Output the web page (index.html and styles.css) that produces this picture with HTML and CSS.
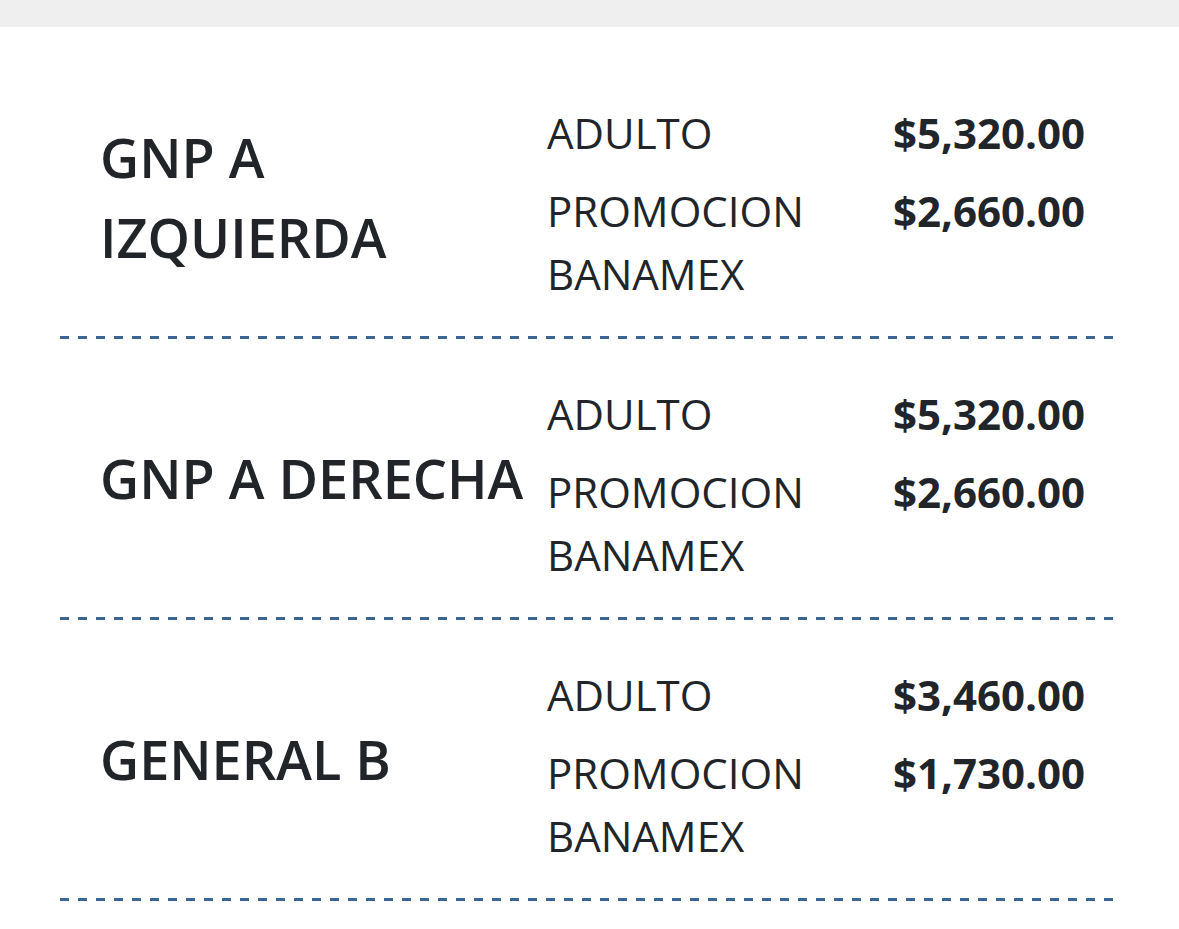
FILE: index.html
```html
<!DOCTYPE html>
<html lang="es">
<head>
<meta charset="utf-8">
<title>Precios</title>
<link rel="stylesheet" href="styles.css">
</head>
<body>
<div class="topbar"></div>
<main class="prices">
  <section class="zone">
    <h2 class="zone-name">GNP A IZQUIERDA</h2>
    <div class="tickets">
      <div class="ticket"><span class="label">ADULTO</span><span class="price">$5,320.00</span></div>
      <div class="ticket"><span class="label">PROMOCION BANAMEX</span><span class="price">$2,660.00</span></div>
    </div>
  </section>
  <section class="zone">
    <h2 class="zone-name">GNP A DERECHA</h2>
    <div class="tickets">
      <div class="ticket"><span class="label">ADULTO</span><span class="price">$5,320.00</span></div>
      <div class="ticket"><span class="label">PROMOCION BANAMEX</span><span class="price">$2,660.00</span></div>
    </div>
  </section>
  <section class="zone">
    <h2 class="zone-name">GENERAL B</h2>
    <div class="tickets">
      <div class="ticket"><span class="label">ADULTO</span><span class="price">$3,460.00</span></div>
      <div class="ticket"><span class="label">PROMOCION BANAMEX</span><span class="price">$1,730.00</span></div>
    </div>
  </section>
</main>
</body>
</html>
```
FILE: styles.css
```css
html, body {
  margin: 0;
  padding: 0;
  background: #ffffff;
}
body {
  font-family: "Open Sans", "Liberation Sans", sans-serif;
  color: #212529;
}
.topbar {
  height: 27px;
  background: #efefef;
}
.prices {
  padding: 31px 60px 0 60px;
}
.zone {
  display: flex;
  align-items: center;
  padding: 43px 34px 31px 40px;
  border-bottom: 3px solid transparent;
  border-image: repeating-linear-gradient(90deg, #3b6593 0 9px, transparent 9px 18px) 0 0 3 0 / 0 0 3px 0;
}
.zone-name {
  flex: 0 0 440px;
  margin: 0 7px 12px 0;
  font-size: 54px;
  line-height: 80px;
  font-weight: 600;
}
.tickets {
  flex: 1;
  display: flex;
  flex-direction: column;
  gap: 15px;
}
.ticket {
  display: flex;
  justify-content: space-between;
  font-size: 42px;
  line-height: 63px;
}
.label {
  width: 320px;
}
.price {
  font-weight: 700;
  text-align: right;
}
```
